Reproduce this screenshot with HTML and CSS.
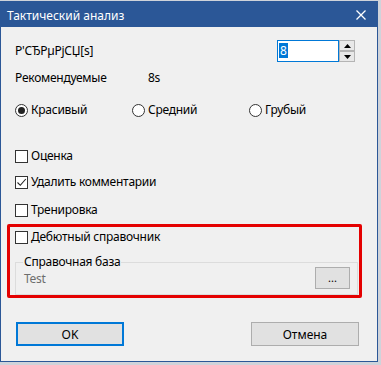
FILE: index.html
```
<!DOCTYPE html>
<html lang="ru">
<head>
<meta charset="utf-8">
<title>Тактический анализ</title>
<link rel="stylesheet" href="styles.css">
</head>
<body>
<div class="window">
  <div class="titlebar">
    <span class="title">Тактический анализ</span>
    <svg class="close" width="10" height="10" viewBox="0 0 10 10"><path d="M0.5 0.5L9.5 9.5M9.5 0.5L0.5 9.5" stroke="#fff" stroke-width="1.3" fill="none"/></svg>
  </div>
  <div class="content">
    <div class="row row-time">
      <span>P'СЂРµРјСЏ[s]</span>
      <div class="spin">
        <div class="spin-input"><span class="sel">8</span></div>
        <div class="spin-btns">
          <div class="spin-btn"><svg width="7" height="4" viewBox="0 0 7 4"><path d="M3.5 0L7 4H0Z" fill="#000"/></svg></div>
          <div class="spin-btn"><svg width="7" height="4" viewBox="0 0 7 4"><path d="M0 0H7L3.5 4Z" fill="#000"/></svg></div>
        </div>
      </div>
    </div>
    <div class="row row-rec">
      <span class="rec-label">Рекомендуемые</span>
      <span>8s</span>
    </div>
    <div class="row row-radios">
      <label class="radio-item"><span class="radio checked"></span>Красивый</label>
      <label class="radio-item"><span class="radio"></span>Средний</label>
      <label class="radio-item"><span class="radio"></span>Грубый</label>
    </div>
    <div class="row check-row first"><span class="check"></span>Оценка</div>
    <div class="row check-row second"><span class="check"><svg width="11" height="11" viewBox="0 0 11 11"><path d="M1.5 5.5L4.3 8.3L9.8 2" stroke="#222" stroke-width="1.1" fill="none"/></svg></span>Удалить комментарии</div>
    <div class="row check-row third"><span class="check"></span>Тренировка</div>
    <div class="highlight">
      <div class="row check-row inner"><span class="check"></span>Дебютный справочник</div>
      <fieldset class="group">
        <legend>Справочная база</legend>
        <div class="group-row">
          <span class="path">Test</span>
          <button class="browse" type="button">...</button>
        </div>
      </fieldset>
    </div>
    <div class="buttons">
      <button class="btn default" type="button">OK</button>
      <button class="btn" type="button">Отмена</button>
    </div>
  </div>
</div>
</body>
</html>
```

FILE: styles.css
```
html, body {
  margin: 0;
  padding: 0;
}
body {
  background: #cfd3da;
  width: 381px;
  height: 365px;
  overflow: hidden;
  font-family: "Noto Sans", "DejaVu Sans", sans-serif;
  font-size: 12px;
  color: #000;
}
.window {
  box-sizing: border-box;
  width: 378px;
  height: 361px;
  margin-top: 1px;
  border: 1px solid #2b5797;
  background: #f0f0f0;
  display: flex;
  flex-direction: column;
}
.titlebar {
  height: 25px;
  background: #2b5797;
  color: #fff;
  display: flex;
  align-items: center;
  padding-left: 6px;
  padding-top: 2px;
  box-sizing: border-box;
}
.title {
  line-height: 16px;
}
.close {
  margin-left: auto;
  margin-right: 11px;
  margin-top: -2px;
}
.content {
  display: flex;
  flex-direction: column;
  padding-left: 14px;
  letter-spacing: -0.25px;
}
.row {
  display: flex;
  align-items: center;
  height: 16px;
  line-height: 16px;
  white-space: nowrap;
}
.row-time {
  margin-top: 13px;
  height: 22px;
  padding-right: 22px;
}
.spin {
  margin-left: auto;
  display: flex;
  height: 22px;
}
.spin-input {
  box-sizing: border-box;
  width: 62px;
  height: 22px;
  border: 1px solid #0078d7;
  background: #fff;
  padding: 2px 0 0 1px;
}
.sel {
  display: inline-block;
  background: #0078d7;
  color: #fff;
  line-height: 15px;
  padding: 0 1px;
}
.spin-btns {
  display: flex;
  flex-direction: column;
  justify-content: space-between;
  width: 16px;
  height: 22px;
}
.spin-btn {
  box-sizing: border-box;
  height: 11px;
  border: 1px solid #b4b4b4;
  background: #e8e8e8;
  display: flex;
  align-items: center;
  justify-content: center;
}
.row-rec {
  margin-top: 8px;
}
.rec-label {
  width: 133px;
}
.row-radios {
  margin-top: 16px;
}
.radio-item {
  display: flex;
  align-items: center;
  width: 117px;
}
.radio {
  box-sizing: border-box;
  width: 13px;
  height: 13px;
  border: 1px solid #333;
  border-radius: 50%;
  background: #fff;
  margin-right: 3px;
  display: flex;
  align-items: center;
  justify-content: center;
}
.radio.checked::after {
  content: "";
  width: 7px;
  height: 7px;
  border-radius: 50%;
  background: #222;
}
.check {
  box-sizing: border-box;
  width: 13px;
  height: 13px;
  border: 1px solid #333;
  background: #fff;
  margin-right: 3px;
  display: flex;
  align-items: center;
  justify-content: center;
}
.check-row.first {
  margin-top: 30px;
}
.check-row.second {
  margin-top: 10px;
}
.check-row.third {
  margin-top: 12px;
}
.highlight {
  box-sizing: border-box;
  width: 355px;
  margin-top: 6px;
  margin-left: -8px;
  border: 3px solid #e40000;
  border-radius: 2px;
  padding: 2px 1px 0 5px;
}
.group {
  box-sizing: border-box;
  width: 343px;
  height: 41px;
  margin: 9px 0 0 0;
  border: 1px solid #dcdcdc;
  padding: 0 7px 5px 7px;
}
.group legend {
  padding: 0 1px;
  line-height: 16px;
}
.group-row {
  display: flex;
  align-items: center;
  margin-top: -3px;
  height: 22px;
}
.path {
  color: #6d6d6d;
  padding-left: 1px;
}
.browse {
  margin-left: auto;
  box-sizing: border-box;
  width: 35px;
  height: 22px;
  border: 1px solid #adadad;
  background: #e1e1e1;
  font: inherit;
  font-size: 11px;
  color: #000;
  padding: 0;
  line-height: 14px;
}
.buttons {
  display: flex;
  justify-content: space-between;
  margin-top: 24px;
  padding-left: 1px;
  padding-right: 18px;
}
.btn {
  box-sizing: border-box;
  width: 108px;
  height: 24px;
  border: 1px solid #adadad;
  background: #e1e1e1;
  font: inherit;
  color: #000;
  padding: 0;
}
.btn.default {
  border: 2px solid #0078d7;
}
```
